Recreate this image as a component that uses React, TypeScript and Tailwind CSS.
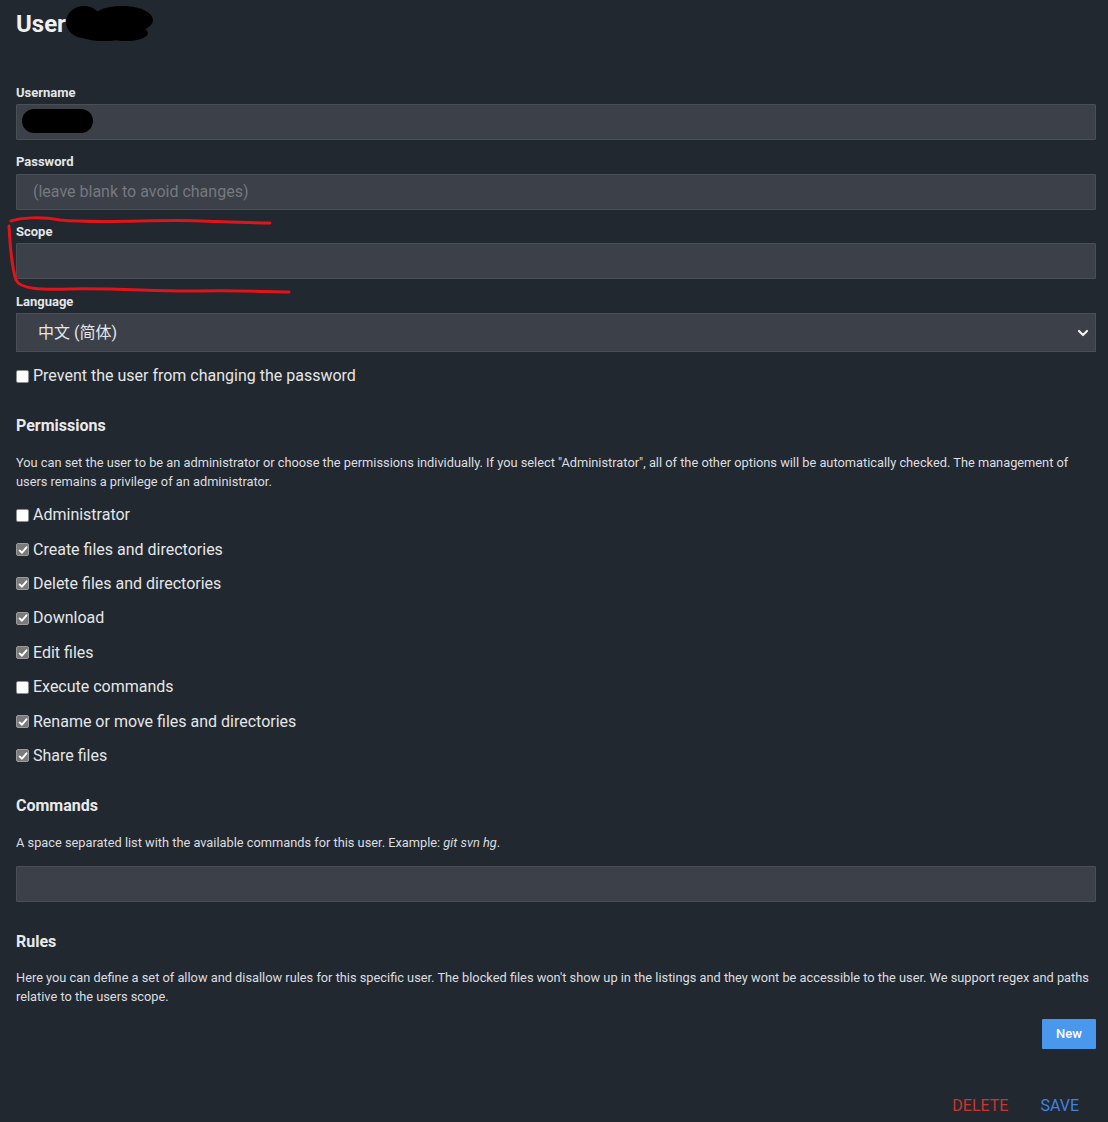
import React from "react";

const perms: { label: string; checked: boolean }[] = [
  { label: "Administrator", checked: false },
  { label: "Create files and directories", checked: true },
  { label: "Delete files and directories", checked: true },
  { label: "Download", checked: true },
  { label: "Edit files", checked: true },
  { label: "Execute commands", checked: false },
  { label: "Rename or move files and directories", checked: true },
  { label: "Share files", checked: true },
];

function Box({ checked }: { checked: boolean }) {
  if (!checked) {
    return <span className="inline-block w-[13px] h-[13px] rounded-[2px] bg-white border border-[#8f8f8f] shrink-0" />;
  }
  return (
    <span className="inline-flex items-center justify-center w-[13px] h-[13px] rounded-[2px] bg-[#7a7a7a] border border-[#9a9a9a] shrink-0">
      <svg width="10" height="10" viewBox="0 0 10 10">
        <path d="M1.6 5.4 L4 7.7 L8.5 2.3" fill="none" stroke="#ffffff" strokeWidth="1.9" strokeLinecap="round" strokeLinejoin="round" />
      </svg>
    </span>
  );
}

function Check({ label, checked }: { label: string; checked: boolean }) {
  return (
    <div className="flex items-center gap-[4px] h-[20px] text-[16px] leading-[20px] text-[#e4e6e8]">
      <Box checked={checked} />
      <span>{label}</span>
    </div>
  );
}

const inputCls =
  "block w-full h-[36px] bg-[#3c4048] border border-[#4a4e55] rounded-[1px]";

export default function App() {
  return (
    <div
      className="relative min-h-[1122px] bg-[#22282f] text-[#e4e6e8] overflow-hidden"
      style={{ fontFamily: "Roboto, 'Noto Sans CJK SC', sans-serif" }}
    >
      <div className="pl-4 pr-[12px] pt-[8px]">
        <h1 className="text-[24px] leading-[32px] font-bold text-[#eef0f2]">User</h1>

        <div className="mt-[46px] text-[13px] leading-[14px] font-bold">Username</div>
        <div className={"mt-[4px] " + inputCls} />

        <div className="mt-[15px] text-[13px] leading-[14px] font-bold">Password</div>
        <div className={"mt-[5px] " + inputCls + " flex items-center pl-[16px] text-[16px] text-[#757980]"}>
          (leave blank to avoid changes)
        </div>

        <div className="mt-[15px] text-[13px] leading-[14px] font-bold">Scope</div>
        <div className={"mt-[4px] " + inputCls} />

        <div className="mt-[16px] text-[13px] leading-[14px] font-bold">Language</div>
        <div className="mt-[4px] flex items-center justify-between w-full h-[39px] bg-[#3c4048] border border-[#4a4e55] pl-[21px] pr-[6px] text-[16px] text-[#e4e6e8]">
          <span>中文 (简体)</span>
          <svg width="12" height="10" viewBox="0 0 12 10">
            <path d="M2 3 L6 7 L10 3" fill="none" stroke="#f0f0f0" strokeWidth="2.2" strokeLinecap="round" strokeLinejoin="round" />
          </svg>
        </div>

        <div className="mt-[14px]">
          <Check label="Prevent the user from changing the password" checked={false} />
        </div>

        <h2 className="mt-[30px] text-[16px] leading-[20px] font-bold text-[#e8eaec]">Permissions</h2>
        <p className="mt-[16.5px] text-[12.8px] leading-[19px] text-[#dcdee0]">
          You can set the user to be an administrator or choose the permissions individually. If you select "Administrator", all of the other options will be automatically checked. The management of
          <br />
          users remains a privilege of an administrator.
        </p>

        <div className="mt-[7.5px] flex flex-col">
          {perms.map((p) => (
            <div key={p.label} className="h-[34.4px] flex items-center">
              <Check label={p.label} checked={p.checked} />
            </div>
          ))}
        </div>

        <h2 className="mt-[23px] text-[16px] leading-[20px] font-bold text-[#e8eaec]">Commands</h2>
        <p className="mt-[16.5px] text-[12.8px] leading-[19px] text-[#dcdee0]">
          A space separated list with the available commands for this user. Example: <i>git svn hg</i>.
        </p>
        <div className={"mt-[14.5px] " + inputCls + " h-[35px]"} />

        <h2 className="mt-[30px] text-[16px] leading-[20px] font-bold text-[#e8eaec]">Rules</h2>
        <p className="mt-[15.5px] text-[12.8px] leading-[19px] text-[#dcdee0]">
          Here you can define a set of allow and disallow rules for this specific user. The blocked files won't show up in the listings and they wont be accessible to the user. We support regex and paths
          <br />
          relative to the users scope.
        </p>

        <div className="mt-[13.5px] flex justify-end">
          <button className="w-[54px] h-[30px] bg-[#4a98ee] text-white text-[13px] font-medium rounded-[1px]">
            New
          </button>
        </div>

        <div className="mt-[47px] flex justify-end gap-[32px] pr-[17px] text-[16px] leading-[20px]">
          <span className="text-[#c8362f]">DELETE</span>
          <span className="text-[#3e83e0]">SAVE</span>
        </div>
      </div>

      <svg className="absolute left-0 top-0 pointer-events-none" width="1108" height="1122" viewBox="0 0 1108 1122">
        <ellipse cx="84" cy="22" rx="18" ry="16" fill="#000" />
        <ellipse cx="122" cy="20" rx="31" ry="14" fill="#000" />
        <ellipse cx="104" cy="30" rx="32" ry="11" fill="#000" />
        <ellipse cx="126" cy="33" rx="22" ry="8" fill="#000" />
        <rect x="22" y="109" width="71" height="24" rx="12" fill="#000" />
        <path
          d="M11 221 C 20 218, 40 216, 60 220 C 100 224, 160 219, 200 221 C 230 222, 255 223, 270 223"
          fill="none" stroke="#e0141a" strokeWidth="3" strokeLinecap="round"
        />
        <path
          d="M9 226 C 10 245, 12 268, 16 280 C 20 289, 40 290, 70 289 C 120 288, 160 292, 200 291 C 240 290, 270 292, 289 292"
          fill="none" stroke="#e0141a" strokeWidth="3" strokeLinecap="round"
        />
      </svg>
    </div>
  );
}
